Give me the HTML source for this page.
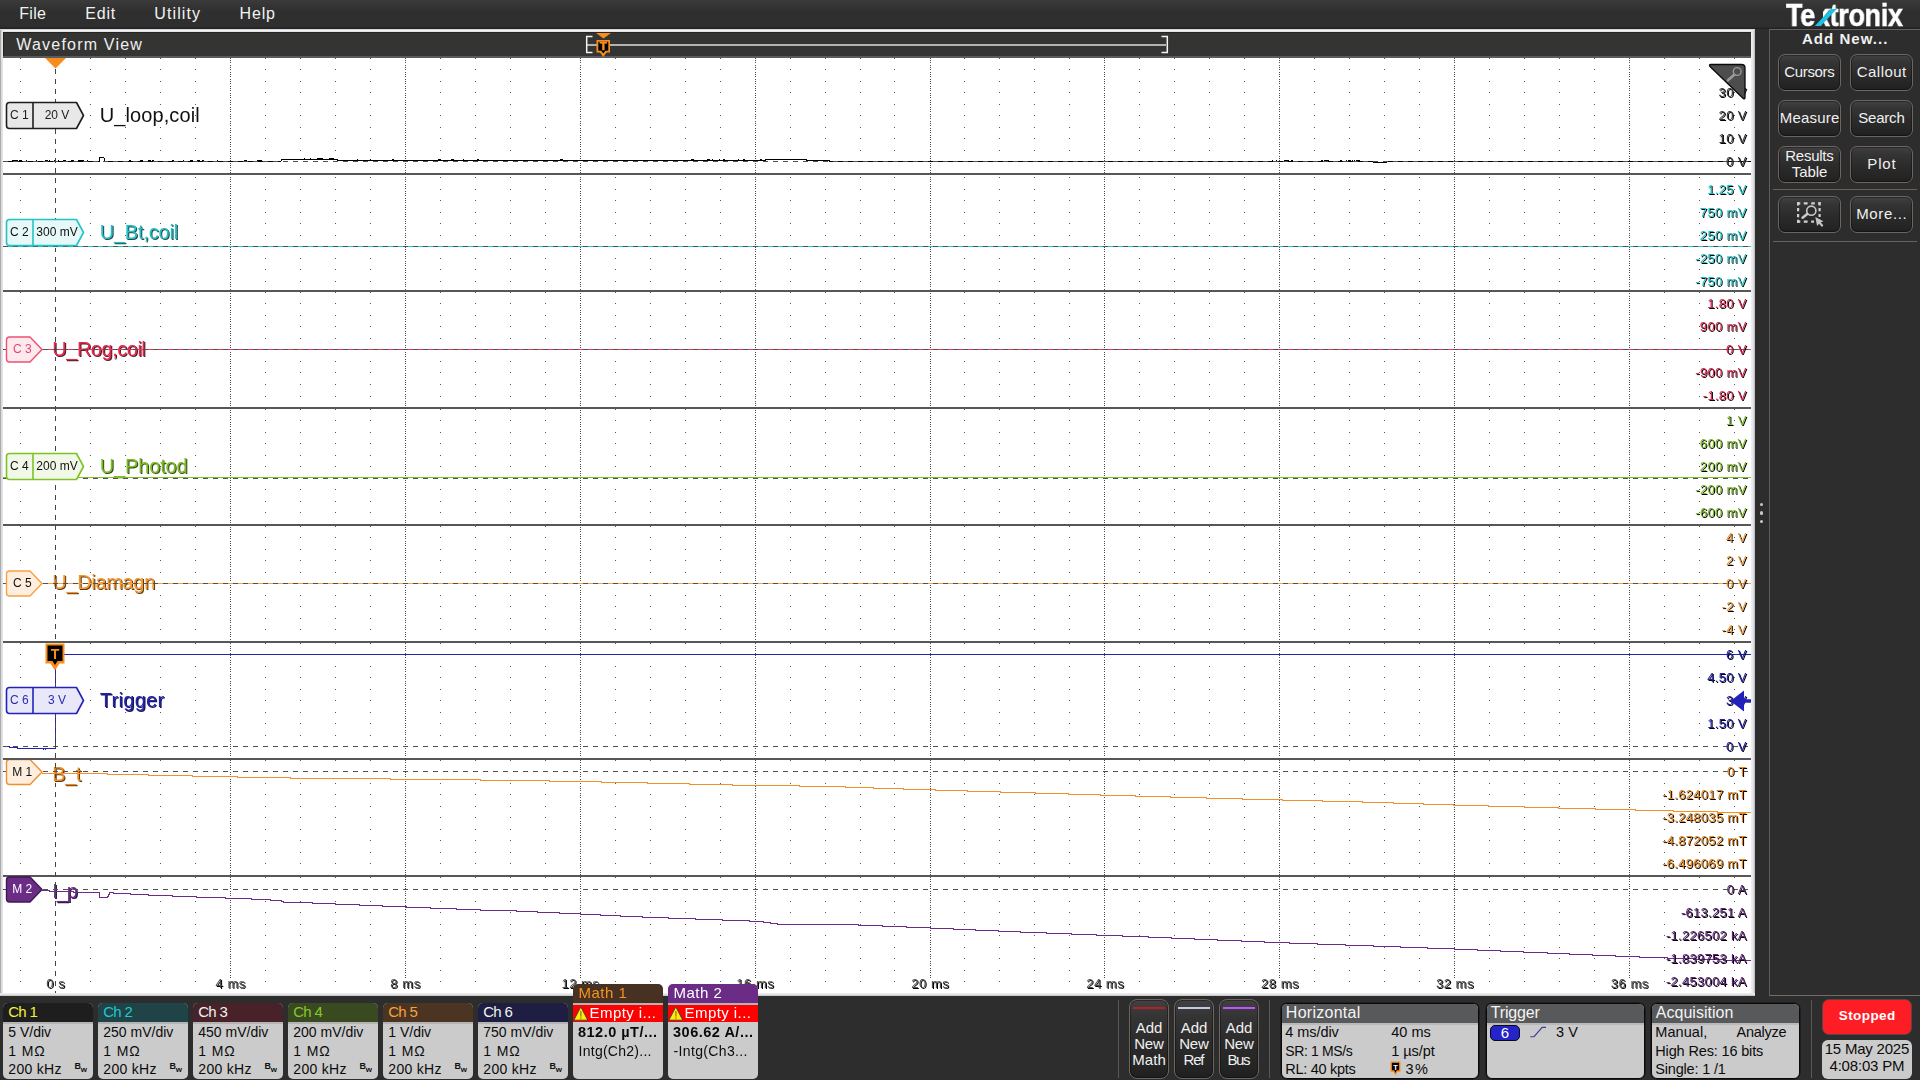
<!DOCTYPE html>
<html lang="en"><head><meta charset="utf-8"><title>Tektronix Waveform View</title>
<style>
*{box-sizing:border-box}
html,body{margin:0;padding:0}
body{width:1920px;height:1080px;overflow:hidden;background:#2d2d2d;font-family:"Liberation Sans",sans-serif;position:relative;color:#fff}
.t{position:absolute;white-space:nowrap}
.abs{position:absolute}
#menubar{position:absolute;left:0;top:0;width:1920px;height:29px;background:linear-gradient(#3b3b3b 0,#343434 6px,#2f2f2f 12px,#2e2e2e 27px,#222 28px,#222 29px)}
#frame{position:absolute;left:0;top:29px;width:1754.6px;height:967px;background:linear-gradient(#cfcfd2,#f2f2f4 50%,#d0d0d3);}
#frame .l{position:absolute;left:0;top:1px;width:3px;height:966px;background:linear-gradient(90deg,#8a8a8c,#d8d8db 40%,#e9e9ec)}
#frame .r{position:absolute;right:0;top:1px;width:3.6px;height:966px;background:linear-gradient(90deg,#f0f0f3,#e4e4e8 55%,#b4b4b8)}
#frame .b{position:absolute;left:0;bottom:0;width:1754.6px;height:3px;background:linear-gradient(#f0f0f2,#dedee2 60%,#bdbdc0)}
#frame .tp{position:absolute;left:0;top:0;width:1754.6px;height:3px;background:linear-gradient(#c4c4c7,#f4f4f6 45%,#dcdce0)}
#title{position:absolute;left:3px;top:32px;width:1748px;height:26px;background:#343432;border-bottom:2px solid #5b5b5d;box-shadow:inset 1px 1px 0 #242422}
#plotbg{position:absolute;left:3px;top:58px;width:1748px;height:935px;background:#fff}
#waveview{position:absolute;left:0;top:0;width:1755px;height:996px}
#bottombar{position:absolute;left:0;top:996px;width:1920px;height:84px;background:#2d2d2d}
svg.plot{position:absolute;left:0;top:0;will-change:transform}
.sep{position:absolute;left:3px;width:1748px;height:2px;background:#575757}
#rpanel{position:absolute;left:1769px;top:29px;width:152px;height:967px;border:1px solid #756b65;border-left-color:#5c5d5f;border-top-color:#6b605c;background:#2d2d2d}
.btn{position:absolute;border:1px solid #6e655f;border-radius:7px;background:linear-gradient(#414143 0,#343435 22%,#2b2b2b 55%,#242424 88%,#1f1f1f 100%);box-shadow:inset 0 0 0 1px rgba(0,0,0,.35)}
.hr{position:absolute;height:1px;background:#6a615b}
.vr{position:absolute;width:1px;background:#5e5651}
.badge{position:absolute;top:1003px;height:76px;border-radius:5px;background:#cbcbcb;overflow:hidden}
.badge .hd{position:absolute;left:0;top:0;right:0;height:19px}
.badge .hl{position:absolute;left:0;right:0;top:19px;height:2px;background:#b4b4b4}
.sbadge{position:absolute;top:1003px;height:76px;border-radius:6px;background:#cbcbcb;overflow:hidden;border:1px solid #0a0a0a;box-shadow:0 0 0 .5px #111}
.sbadge .hd{position:absolute;left:0;top:0;right:0;height:19px;background:#58595b}
.sbadge .hl{position:absolute;left:0;right:0;top:19px;height:2px;background:#b9b9b9}
</style></head>
<body>
<nav id="menubar">
<span class="t " style="top:4px;font-size:16px;line-height:20px;color:#f2f2f2;letter-spacing:0.273px;left:19.30px;">File</span>
<span class="t " style="top:4px;font-size:16px;line-height:20px;color:#f2f2f2;letter-spacing:0.810px;left:85.20px;">Edit</span>
<span class="t " style="top:4px;font-size:16px;line-height:20px;color:#f2f2f2;letter-spacing:1.098px;left:154.30px;">Utility</span>
<span class="t " style="top:4px;font-size:16px;line-height:20px;color:#f2f2f2;letter-spacing:0.798px;left:239.60px;">Help</span>
<span class="t logo" style="left:1786.4px;top:-1px;font-size:30px;line-height:34px;font-weight:bold;color:#fff;letter-spacing:-0.35px;-webkit-text-stroke:0.55px #fff;transform-origin:0 27px;transform:scale(0.9,1.075);will-change:transform">Tektronix</span>
<div class="abs" id="kcover" style="left:1815.3px;top:0;width:7.9px;height:29px;background:linear-gradient(#3b3b3b 0,#343434 6px,#2f2f2f 12px,#2e2e2e 27px,#222 28px,#222 29px)"></div>
<div class="abs" style="left:1815.2px;top:9px;width:6.3px;height:16.8px;background:#1fc1e4;transform:skewX(-43.2deg);transform-origin:0 100%"></div>
</nav>
<section id="waveview">
<div id="frame"><div class="tp"></div><div class="l"></div><div class="r"></div><div class="b"></div></div>
<div id="title"></div>
<span class="t " style="top:35px;font-size:16px;line-height:20px;color:#efefef;letter-spacing:1.197px;left:16.30px;">Waveform View</span>
<div id="plotbg"></div>
<div class="sep" style="top:173px"></div><div class="sep" style="top:290px"></div><div class="sep" style="top:407px"></div><div class="sep" style="top:524px"></div><div class="sep" style="top:641px"></div><div class="sep" style="top:758px"></div><div class="sep" style="top:875px"></div>
<svg class="plot" width="1754" height="1000" viewBox="0 0 1754 1000" font-family="'Liberation Sans', sans-serif"><defs><clipPath id="c7"><rect x="0" y="760" width="200" height="60"/></clipPath></defs><g stroke="#5a5a5a" stroke-width="1" stroke-dasharray="0 0 1 10 1 11 1 10 1 11 1 10 1 11 1 10 1 11 1 26 1 11 1 10 1 11 1 10 1 11 1 22 1 10 1 11 1 10 1 10 1 11 1 10 1 11 1 22 1 10 1 11 1 11 1 12 1 10 1 11 1 10 1 11 1 10 1 22 1 11 1 10 1 13 1 10 1 11 1 10 1 11 1 22 1 10 1 11 1 10 1 13 1 10 1 11 1 10 1 11 1 10 1 11 1 10 1 11 1 24 1 22 1 10 1 11 1 10 1 11 1 10 1 11 1 10 1 13 1 23 1 10 1 11 1 10 1 11 1 10 1 11 1 10 1 2000" shape-rendering="crispEdges"><line x1="20.5" x2="20.5" y1="58" y2="993"/><line x1="90.5" x2="90.5" y1="58" y2="993"/><line x1="125.5" x2="125.5" y1="58" y2="993"/><line x1="160.5" x2="160.5" y1="58" y2="993"/><line x1="195.5" x2="195.5" y1="58" y2="993"/><line x1="265.5" x2="265.5" y1="58" y2="993"/><line x1="300.5" x2="300.5" y1="58" y2="993"/><line x1="335.5" x2="335.5" y1="58" y2="993"/><line x1="370.5" x2="370.5" y1="58" y2="993"/><line x1="440.5" x2="440.5" y1="58" y2="993"/><line x1="475.5" x2="475.5" y1="58" y2="993"/><line x1="510.5" x2="510.5" y1="58" y2="993"/><line x1="545.5" x2="545.5" y1="58" y2="993"/><line x1="615.5" x2="615.5" y1="58" y2="993"/><line x1="650.5" x2="650.5" y1="58" y2="993"/><line x1="685.5" x2="685.5" y1="58" y2="993"/><line x1="720.5" x2="720.5" y1="58" y2="993"/><line x1="790.5" x2="790.5" y1="58" y2="993"/><line x1="825.5" x2="825.5" y1="58" y2="993"/><line x1="860.5" x2="860.5" y1="58" y2="993"/><line x1="894.5" x2="894.5" y1="58" y2="993"/><line x1="964.5" x2="964.5" y1="58" y2="993"/><line x1="999.5" x2="999.5" y1="58" y2="993"/><line x1="1034.5" x2="1034.5" y1="58" y2="993"/><line x1="1069.5" x2="1069.5" y1="58" y2="993"/><line x1="1139.5" x2="1139.5" y1="58" y2="993"/><line x1="1174.5" x2="1174.5" y1="58" y2="993"/><line x1="1209.5" x2="1209.5" y1="58" y2="993"/><line x1="1244.5" x2="1244.5" y1="58" y2="993"/><line x1="1314.5" x2="1314.5" y1="58" y2="993"/><line x1="1349.5" x2="1349.5" y1="58" y2="993"/><line x1="1384.5" x2="1384.5" y1="58" y2="993"/><line x1="1419.5" x2="1419.5" y1="58" y2="993"/><line x1="1489.5" x2="1489.5" y1="58" y2="993"/><line x1="1524.5" x2="1524.5" y1="58" y2="993"/><line x1="1559.5" x2="1559.5" y1="58" y2="993"/><line x1="1594.5" x2="1594.5" y1="58" y2="993"/><line x1="1664.5" x2="1664.5" y1="58" y2="993"/><line x1="1699.5" x2="1699.5" y1="58" y2="993"/><line x1="1734.5" x2="1734.5" y1="58" y2="993"/></g><g stroke="#4a4a4a" stroke-width="1" stroke-dasharray="1 1 1 1 1 2" shape-rendering="crispEdges"><line x1="230.5" x2="230.5" y1="58" y2="978"/><line x1="405.5" x2="405.5" y1="58" y2="978"/><line x1="580.5" x2="580.5" y1="58" y2="978"/><line x1="755.5" x2="755.5" y1="58" y2="978"/><line x1="930.5" x2="930.5" y1="58" y2="978"/><line x1="1104.5" x2="1104.5" y1="58" y2="978"/><line x1="1279.5" x2="1279.5" y1="58" y2="978"/><line x1="1454.5" x2="1454.5" y1="58" y2="978"/><line x1="1629.5" x2="1629.5" y1="58" y2="978"/></g><text x="99.70" y="121.60" font-size="20" fill="#111" text-anchor="start" letter-spacing="0.105">U_loop,coil</text><text x="99.70" y="238.60" font-size="20" fill="#1fc0c6" text-anchor="start" letter-spacing="-0.191" style="text-shadow:1px 1px 0 #2a4a4c">U_Bt,coil</text><text x="52.30" y="355.60" font-size="20" fill="#e8294f" text-anchor="start" letter-spacing="-0.480" style="text-shadow:1px 1px 0 #4a2028">U_Rog,coil</text><text x="99.70" y="472.60" font-size="20" fill="#7cbc26" text-anchor="start" letter-spacing="-0.137" style="text-shadow:1px 1px 0 #34481a">U_Photod</text><text x="52.30" y="589.40" font-size="20" fill="#f6962a" text-anchor="start" letter-spacing="-0.326" style="text-shadow:1px 1px 0 #5a3c18">U_Diamagn</text><text x="99.70" y="706.80" font-size="20" fill="#2222b0" text-anchor="start" letter-spacing="0.315" style="text-shadow:1px 1px 0 #16164a">Trigger</text><text x="52.30" y="780.50" font-size="20" fill="#ee8a1e" text-anchor="start" letter-spacing="-0.510" style="text-shadow:1px 1px 0 #5a3c18">B_t</text><text x="52.30" y="897.60" font-size="20" fill="#6b2c86" text-anchor="start" letter-spacing="-1.151" style="text-shadow:1px 1px 0 #2a1236">I_p</text><polyline fill="none" stroke="#000" stroke-width="1" shape-rendering="crispEdges" points="3,161.5 99.5,161.5 99.5,157.5 103.5,157.5 104.5,158.5 104.5,161.5 281,161.5 281.5,159.5 337,159.5 337.5,160.5 765,160.5 765.5,159.5 806.5,159.5 807,160.5 829.5,160.5 830,161.5 1373.5,161.5 1374,162.5 1386.5,162.5 1387,161.5 1751,161.5"/><g fill="#000" shape-rendering="crispEdges"><rect x="49" y="160" width="1" height="1"/><rect x="58" y="160" width="1" height="1"/><rect x="17" y="160" width="1" height="1"/><rect x="54" y="160" width="1" height="1"/><rect x="72" y="160" width="1" height="1"/><rect x="12" y="160" width="1" height="1"/><rect x="63" y="160" width="3" height="1"/><rect x="16" y="160" width="1" height="1"/><rect x="19" y="160" width="3" height="1"/><rect x="15" y="160" width="1" height="1"/><rect x="36" y="160" width="1" height="1"/><rect x="81" y="160" width="3" height="1"/><rect x="14" y="160" width="1" height="1"/><rect x="13" y="160" width="1" height="1"/><rect x="45" y="160" width="3" height="1"/><rect x="26" y="160" width="1" height="1"/><rect x="81" y="160" width="2" height="1"/><rect x="79" y="160" width="1" height="1"/><rect x="21" y="160" width="1" height="1"/><rect x="55" y="160" width="1" height="1"/><rect x="78" y="160" width="1" height="1"/><rect x="80" y="160" width="1" height="1"/><rect x="87" y="160" width="1" height="1"/><rect x="71" y="160" width="3" height="1"/><rect x="190" y="160" width="3" height="1"/><rect x="259" y="160" width="3" height="1"/><rect x="202" y="160" width="2" height="1"/><rect x="173" y="160" width="1" height="1"/><rect x="172" y="160" width="1" height="1"/><rect x="257" y="160" width="2" height="1"/><rect x="244" y="160" width="3" height="1"/><rect x="197" y="160" width="3" height="1"/><rect x="183" y="160" width="1" height="1"/><rect x="140" y="160" width="3" height="1"/><rect x="152" y="160" width="2" height="1"/><rect x="148" y="160" width="3" height="1"/><rect x="217" y="160" width="1" height="1"/><rect x="129" y="160" width="2" height="1"/><rect x="321" y="158" width="2" height="1"/><rect x="331" y="158" width="3" height="1"/><rect x="304" y="158" width="1" height="1"/><rect x="317" y="158" width="3" height="1"/><rect x="304" y="158" width="1" height="1"/><rect x="319" y="158" width="3" height="1"/><rect x="318" y="158" width="3" height="1"/><rect x="322" y="158" width="1" height="1"/><rect x="329" y="158" width="2" height="1"/><rect x="310" y="158" width="1" height="1"/><rect x="463" y="159" width="1" height="1"/><rect x="392" y="159" width="2" height="1"/><rect x="370" y="159" width="1" height="1"/><rect x="438" y="159" width="3" height="1"/><rect x="560" y="159" width="3" height="1"/><rect x="357" y="159" width="1" height="1"/><rect x="451" y="159" width="3" height="1"/><rect x="477" y="159" width="2" height="1"/><rect x="707" y="159" width="3" height="1"/><rect x="760" y="159" width="2" height="1"/><rect x="743" y="159" width="2" height="1"/><rect x="738" y="159" width="1" height="1"/><rect x="709" y="159" width="1" height="1"/><rect x="712" y="159" width="1" height="1"/><rect x="719" y="159" width="1" height="1"/><rect x="691" y="159" width="3" height="1"/><rect x="765" y="159" width="1" height="1"/><rect x="723" y="159" width="2" height="1"/><rect x="1272" y="160" width="1" height="1"/><rect x="1285" y="160" width="2" height="1"/><rect x="1291" y="160" width="2" height="1"/><rect x="1276" y="160" width="1" height="1"/><rect x="1286" y="160" width="3" height="1"/><rect x="1284" y="160" width="3" height="1"/><rect x="1284" y="160" width="1" height="1"/><rect x="1348" y="160" width="3" height="1"/><rect x="1321" y="160" width="1" height="1"/><rect x="1322" y="160" width="1" height="1"/><rect x="1346" y="160" width="1" height="1"/><rect x="1325" y="160" width="2" height="1"/><rect x="1356" y="160" width="1" height="1"/><rect x="1324" y="160" width="1" height="1"/><rect x="1354" y="160" width="1" height="1"/><rect x="1352" y="160" width="1" height="1"/><rect x="1341" y="160" width="1" height="1"/><rect x="1322" y="160" width="1" height="1"/><rect x="1357" y="160" width="3" height="1"/><rect x="1327" y="160" width="2" height="1"/><rect x="1340" y="160" width="2" height="1"/><rect x="1348" y="160" width="1" height="1"/><rect x="1325" y="160" width="3" height="1"/></g><line x1="3" x2="1751" y1="246.5" y2="246.5" stroke="#1fc8cc" stroke-width="1" shape-rendering="crispEdges"/><line x1="3" x2="1751" y1="349.5" y2="349.5" stroke="#e8385e" stroke-width="1" shape-rendering="crispEdges"/><line x1="3" x2="1751" y1="477.5" y2="477.5" stroke="#7cc023" stroke-width="1" shape-rendering="crispEdges"/><line x1="3" x2="1751" y1="583.5" y2="583.5" stroke="#f9a13c" stroke-width="1" shape-rendering="crispEdges"/><polyline fill="none" stroke="#2323b4" stroke-width="1" shape-rendering="crispEdges" points="8,746.5 9.5,746.5 9.5,747.5 17.5,747.5 17.5,748.5 55.5,748.5 55.5,654.5 1751,654.5"/><rect x="43" y="749" width="1" height="1" fill="#2323b4"/><rect x="45" y="749" width="1" height="1" fill="#2323b4"/><line x1="3" x2="1751" y1="161.5" y2="161.5" stroke="#505050" stroke-width="1" stroke-dasharray="5 5" shape-rendering="crispEdges"/><line x1="3" x2="1751" y1="246.5" y2="246.5" stroke="#505050" stroke-width="1" stroke-dasharray="5 5" shape-rendering="crispEdges"/><line x1="3" x2="1751" y1="349.5" y2="349.5" stroke="#505050" stroke-width="1" stroke-dasharray="5 5" shape-rendering="crispEdges"/><line x1="3" x2="1751" y1="478.5" y2="478.5" stroke="#505050" stroke-width="1" stroke-dasharray="5 5" shape-rendering="crispEdges"/><line x1="3" x2="1751" y1="583.5" y2="583.5" stroke="#505050" stroke-width="1" stroke-dasharray="5 5" shape-rendering="crispEdges"/><line x1="3" x2="1751" y1="746.5" y2="746.5" stroke="#505050" stroke-width="1" stroke-dasharray="5 5" shape-rendering="crispEdges"/><line x1="3" x2="1751" y1="771.5" y2="771.5" stroke="#505050" stroke-width="1" stroke-dasharray="5 5" shape-rendering="crispEdges"/><line x1="3" x2="1751" y1="889.5" y2="889.5" stroke="#505050" stroke-width="1" stroke-dasharray="5 5" shape-rendering="crispEdges"/><line x1="55.5" x2="55.5" y1="59.35" y2="993" stroke="#444" stroke-width="1" stroke-dasharray="4.9 5.007" shape-rendering="crispEdges"/><polyline fill="none" stroke="#f0902a" stroke-width="1" shape-rendering="crispEdges" points="42,773.5 107.5,773.5 107.5,774.5 148.5,774.5 148.5,775.5 192.5,775.5 192.5,776.5 237.5,776.5 237.5,777.5 290,777.5 290,778.5 390,778.5 390,779.5 480,779.5 480,780.5 549,780.5 549,781.5 601,781.5 601,782.5 647,782.5 647,783.5 689,783.5 689,784.5 732,784.5 732,785.5 799,785.5 799,786.5 845,786.5 845,787.5 873,787.5 873,788.5 903,788.5 903,789.5 935,789.5 935,790.5 967,790.5 967,791.5 1000,791.5 1000,792.5 1035,792.5 1035,793.5 1068,793.5 1068,794.5 1100,794.5 1100,795.5 1135,795.5 1135,796.5 1170,796.5 1170,797.5 1206,797.5 1206,798.5 1242,798.5 1242,799.5 1282,799.5 1282,800.5 1322,800.5 1322,801.5 1362,801.5 1362,802.5 1393,802.5 1393,803.5 1423,803.5 1423,804.5 1453,804.5 1453,805.5 1488,805.5 1488,806.5 1524,806.5 1524,807.5 1558,807.5 1558,808.5 1595,808.5 1595,809.5 1635,809.5 1635,810.5 1673.5,810.5 1673.5,811.5 1717.5,811.5 1717.5,812.5 1751,812.5"/><polyline fill="none" stroke="#6b2c86" stroke-width="1" shape-rendering="crispEdges" points="42,890.5 49,890.5 49,891.5 73,891.5 73,892.5 99,892.5 99,897.5 107,897.5 107,896.5 108,896.5 108,894.5 109,894.5 109,892.5 113,892.5 113,893.5 130,893.5 130,894.5 148,894.5 148,895.5 172,895.5 172,896.5 196,896.5 196,897.5 225,897.5 225,898.5 251,898.5 251,899.5 270,899.5 270,900.5 281,900.5 281,901.5 283,901.5 283,902.5 312,902.5 312,903.5 335,903.5 335,904.5 359,904.5 359,905.5 382,905.5 382,906.5 406,906.5 406,907.5 430,907.5 430,908.5 456,908.5 456,909.5 480,909.5 480,910.5 516,910.5 516,911.5 537,911.5 537,912.5 559,912.5 559,913.5 580,913.5 580,914.5 600,914.5 600,915.5 620,915.5 620,916.5 642,916.5 642,917.5 668,917.5 668,918.5 695,918.5 695,919.5 722,919.5 722,920.5 749,920.5 749,921.5 763,921.5 763,922.5 770,922.5 770,923.5 777,923.5 777,924.5 858,924.5 858,925.5 882,925.5 882,926.5 906,926.5 906,927.5 930,927.5 930,928.5 953,928.5 953,929.5 975,929.5 975,930.5 998,930.5 998,931.5 1020,931.5 1020,932.5 1046,932.5 1046,933.5 1071,933.5 1071,934.5 1096,934.5 1096,935.5 1122,935.5 1122,936.5 1148,936.5 1148,937.5 1171,937.5 1171,938.5 1194,938.5 1194,939.5 1217,939.5 1217,940.5 1241,940.5 1241,941.5 1264,941.5 1264,942.5 1289,942.5 1289,943.5 1317,943.5 1317,944.5 1345,944.5 1345,945.5 1373,945.5 1373,946.5 1400,946.5 1400,947.5 1427,947.5 1427,948.5 1454,948.5 1454,949.5 1477,949.5 1477,950.5 1500,950.5 1500,951.5 1523,951.5 1523,952.5 1547,952.5 1547,953.5 1569,953.5 1569,954.5 1592,954.5 1592,955.5 1615,955.5 1615,956.5 1639,956.5 1639,957.5 1667,957.5 1667,958.5 1695,958.5 1695,959.5 1723,959.5 1723,960.5 1751,960.5"/><text x="1746.76" y="96.70" font-size="13" fill="#383838" text-anchor="end" letter-spacing="0.357" style="text-shadow:1px 1px 0 #000">30 V</text><text x="1746.76" y="119.95" font-size="13" fill="#383838" text-anchor="end" letter-spacing="0.357" style="text-shadow:1px 1px 0 #000">20 V</text><text x="1746.76" y="142.70" font-size="13" fill="#383838" text-anchor="end" letter-spacing="0.357" style="text-shadow:1px 1px 0 #000">10 V</text><text x="1746.79" y="165.70" font-size="13" fill="#383838" text-anchor="end" letter-spacing="0.390" style="text-shadow:1px 1px 0 #000">0 V</text><text x="1746.70" y="193.70" font-size="13" fill="#1fc0c4" text-anchor="end" letter-spacing="0.301" style="text-shadow:1px 1px 0 #000">1.25 V</text><text x="1746.76" y="216.70" font-size="13" fill="#1fc0c4" text-anchor="end" letter-spacing="0.358" style="text-shadow:1px 1px 0 #000">750 mV</text><text x="1746.76" y="239.95" font-size="13" fill="#1fc0c4" text-anchor="end" letter-spacing="0.358" style="text-shadow:1px 1px 0 #000">250 mV</text><text x="1746.73" y="262.70" font-size="13" fill="#1fc0c4" text-anchor="end" letter-spacing="0.328" style="text-shadow:1px 1px 0 #000">-250 mV</text><text x="1746.73" y="285.70" font-size="13" fill="#1fc0c4" text-anchor="end" letter-spacing="0.328" style="text-shadow:1px 1px 0 #000">-750 mV</text><text x="1746.70" y="307.70" font-size="13" fill="#d8284e" text-anchor="end" letter-spacing="0.301" style="text-shadow:1px 1px 0 #000">1.80 V</text><text x="1746.76" y="330.70" font-size="13" fill="#d8284e" text-anchor="end" letter-spacing="0.358" style="text-shadow:1px 1px 0 #000">900 mV</text><text x="1746.79" y="354.10" font-size="13" fill="#d8284e" text-anchor="end" letter-spacing="0.390" style="text-shadow:1px 1px 0 #000">0 V</text><text x="1746.73" y="377.20" font-size="13" fill="#d8284e" text-anchor="end" letter-spacing="0.328" style="text-shadow:1px 1px 0 #000">-900 mV</text><text x="1746.68" y="400.30" font-size="13" fill="#d8284e" text-anchor="end" letter-spacing="0.279" style="text-shadow:1px 1px 0 #000">-1.80 V</text><text x="1746.79" y="424.70" font-size="13" fill="#78b820" text-anchor="end" letter-spacing="0.390" style="text-shadow:1px 1px 0 #000">1 V</text><text x="1746.76" y="447.70" font-size="13" fill="#78b820" text-anchor="end" letter-spacing="0.358" style="text-shadow:1px 1px 0 #000">600 mV</text><text x="1746.76" y="470.70" font-size="13" fill="#78b820" text-anchor="end" letter-spacing="0.358" style="text-shadow:1px 1px 0 #000">200 mV</text><text x="1746.73" y="493.70" font-size="13" fill="#78b820" text-anchor="end" letter-spacing="0.328" style="text-shadow:1px 1px 0 #000">-200 mV</text><text x="1746.73" y="516.70" font-size="13" fill="#78b820" text-anchor="end" letter-spacing="0.328" style="text-shadow:1px 1px 0 #000">-600 mV</text><text x="1746.79" y="541.70" font-size="13" fill="#f0983a" text-anchor="end" letter-spacing="0.390" style="text-shadow:1px 1px 0 #000">4 V</text><text x="1746.79" y="564.70" font-size="13" fill="#f0983a" text-anchor="end" letter-spacing="0.390" style="text-shadow:1px 1px 0 #000">2 V</text><text x="1746.79" y="587.70" font-size="13" fill="#f0983a" text-anchor="end" letter-spacing="0.390" style="text-shadow:1px 1px 0 #000">0 V</text><text x="1746.72" y="610.70" font-size="13" fill="#f0983a" text-anchor="end" letter-spacing="0.318" style="text-shadow:1px 1px 0 #000">-2 V</text><text x="1746.72" y="633.70" font-size="13" fill="#f0983a" text-anchor="end" letter-spacing="0.318" style="text-shadow:1px 1px 0 #000">-4 V</text><text x="1746.79" y="658.70" font-size="13" fill="#2222aa" text-anchor="end" letter-spacing="0.390" style="text-shadow:1px 1px 0 #000">6 V</text><text x="1746.70" y="681.70" font-size="13" fill="#2222aa" text-anchor="end" letter-spacing="0.301" style="text-shadow:1px 1px 0 #000">4.50 V</text><text x="1746.79" y="704.70" font-size="13" fill="#2222aa" text-anchor="end" letter-spacing="0.390" style="text-shadow:1px 1px 0 #000">3 V</text><text x="1746.70" y="727.70" font-size="13" fill="#2222aa" text-anchor="end" letter-spacing="0.301" style="text-shadow:1px 1px 0 #000">1.50 V</text><text x="1746.79" y="750.70" font-size="13" fill="#2222aa" text-anchor="end" letter-spacing="0.390" style="text-shadow:1px 1px 0 #000">0 V</text><text x="1746.77" y="775.70" font-size="13" fill="#e8861c" text-anchor="end" letter-spacing="0.371" style="text-shadow:1px 1px 0 #000">0 T</text><text x="1746.69" y="798.70" font-size="13" fill="#e8861c" text-anchor="end" letter-spacing="0.294" style="text-shadow:1px 1px 0 #000">-1.624017 mT</text><text x="1746.69" y="821.70" font-size="13" fill="#e8861c" text-anchor="end" letter-spacing="0.294" style="text-shadow:1px 1px 0 #000">-3.248035 mT</text><text x="1746.69" y="844.70" font-size="13" fill="#e8861c" text-anchor="end" letter-spacing="0.294" style="text-shadow:1px 1px 0 #000">-4.872052 mT</text><text x="1746.69" y="867.70" font-size="13" fill="#e8861c" text-anchor="end" letter-spacing="0.294" style="text-shadow:1px 1px 0 #000">-6.496069 mT</text><text x="1746.78" y="893.70" font-size="13" fill="#5f2579" text-anchor="end" letter-spacing="0.376" style="text-shadow:1px 1px 0 #000">0 A</text><text x="1746.68" y="916.70" font-size="13" fill="#5f2579" text-anchor="end" letter-spacing="0.279" style="text-shadow:1px 1px 0 #000">-613.251 A</text><text x="1746.68" y="939.70" font-size="13" fill="#5f2579" text-anchor="end" letter-spacing="0.281" style="text-shadow:1px 1px 0 #000">-1.226502 kA</text><text x="1746.68" y="962.70" font-size="13" fill="#5f2579" text-anchor="end" letter-spacing="0.281" style="text-shadow:1px 1px 0 #000">-1.839753 kA</text><text x="1746.68" y="985.70" font-size="13" fill="#5f2579" text-anchor="end" letter-spacing="0.281" style="text-shadow:1px 1px 0 #000">-2.453004 kA</text><text x="55.76" y="988.00" font-size="13" fill="#505050" text-anchor="middle" letter-spacing="0.520" style="text-shadow:1px 1px 0 #000">0 s</text><text x="230.68" y="988.00" font-size="13" fill="#505050" text-anchor="middle" letter-spacing="0.563" style="text-shadow:1px 1px 0 #000">4 ms</text><text x="405.58" y="988.00" font-size="13" fill="#505050" text-anchor="middle" letter-spacing="0.563" style="text-shadow:1px 1px 0 #000">8 ms</text><text x="580.47" y="988.00" font-size="13" fill="#505050" text-anchor="middle" letter-spacing="0.531" style="text-shadow:1px 1px 0 #000">12 ms</text><text x="755.37" y="988.00" font-size="13" fill="#505050" text-anchor="middle" letter-spacing="0.531" style="text-shadow:1px 1px 0 #000">16 ms</text><text x="930.27" y="988.00" font-size="13" fill="#505050" text-anchor="middle" letter-spacing="0.531" style="text-shadow:1px 1px 0 #000">20 ms</text><text x="1105.17" y="988.00" font-size="13" fill="#505050" text-anchor="middle" letter-spacing="0.531" style="text-shadow:1px 1px 0 #000">24 ms</text><text x="1280.07" y="988.00" font-size="13" fill="#505050" text-anchor="middle" letter-spacing="0.531" style="text-shadow:1px 1px 0 #000">28 ms</text><text x="1454.97" y="988.00" font-size="13" fill="#505050" text-anchor="middle" letter-spacing="0.531" style="text-shadow:1px 1px 0 #000">32 ms</text><text x="1629.87" y="988.00" font-size="13" fill="#505050" text-anchor="middle" letter-spacing="0.531" style="text-shadow:1px 1px 0 #000">36 ms</text><path d="M9.5,102.5 H76.5 L83.5,115.5 L76.5,128.5 H9.5 Q6.5,128.5 6.5,125.5 V105.5 Q6.5,102.5 9.5,102.5 Z" fill="#e8e8e8" stroke="#1e1e1e" stroke-width="1.6" stroke-linejoin="round"/><line x1="33" x2="33" y1="102.5" y2="128.5" stroke="#1e1e1e" stroke-width="1.6"/><text x="19.30" y="119.10" font-size="12" fill="#1a1a1a" text-anchor="middle">C 1</text><text x="57.00" y="119.10" font-size="12" fill="#1a1a1a" text-anchor="middle">20 V</text><path d="M9.5,219.5 H76.5 L83.5,232.5 L76.5,245.5 H9.5 Q6.5,245.5 6.5,242.5 V222.5 Q6.5,219.5 9.5,219.5 Z" fill="#e6f8f8" stroke="#22c4c8" stroke-width="1.6" stroke-linejoin="round"/><line x1="33" x2="33" y1="219.5" y2="245.5" stroke="#22c4c8" stroke-width="1.6"/><text x="19.30" y="236.10" font-size="12" fill="#111" text-anchor="middle">C 2</text><text x="57.00" y="236.10" font-size="12" fill="#111" text-anchor="middle">300 mV</text><path d="M9.5,337.0 H30 L42,349.5 L30,362.0 H9.5 Q6.5,362.0 6.5,359.0 V340.0 Q6.5,337.0 9.5,337.0 Z" fill="#fdeaee" stroke="#ee5070" stroke-width="1.4" stroke-linejoin="round"/><text x="22.30" y="353.10" font-size="12" fill="#e8446a" text-anchor="middle">C 3</text><path d="M9.5,453.5 H76.5 L83.5,466.5 L76.5,479.5 H9.5 Q6.5,479.5 6.5,476.5 V456.5 Q6.5,453.5 9.5,453.5 Z" fill="#f1f8e8" stroke="#7ec225" stroke-width="1.6" stroke-linejoin="round"/><line x1="33" x2="33" y1="453.5" y2="479.5" stroke="#7ec225" stroke-width="1.6"/><text x="19.30" y="470.10" font-size="12" fill="#111" text-anchor="middle">C 4</text><text x="57.00" y="470.10" font-size="12" fill="#111" text-anchor="middle">200 mV</text><path d="M9.5,571.0 H30 L42,583.5 L30,596.0 H9.5 Q6.5,596.0 6.5,593.0 V574.0 Q6.5,571.0 9.5,571.0 Z" fill="#fdeee0" stroke="#f9a040" stroke-width="1.4" stroke-linejoin="round"/><text x="22.30" y="587.10" font-size="12" fill="#111" text-anchor="middle">C 5</text><path d="M9.5,687.5 H76.5 L83.5,700.5 L76.5,713.5 H9.5 Q6.5,713.5 6.5,710.5 V690.5 Q6.5,687.5 9.5,687.5 Z" fill="#e8e8f8" stroke="#2323bb" stroke-width="1.6" stroke-linejoin="round"/><line x1="33" x2="33" y1="687.5" y2="713.5" stroke="#2323bb" stroke-width="1.6"/><text x="19.30" y="704.10" font-size="12" fill="#2a2ab8" text-anchor="middle">C 6</text><text x="57.00" y="704.10" font-size="12" fill="#2a2ab8" text-anchor="middle">3 V</text><g clip-path="url(#c7)"><path d="M9.5,759.5 H30 L42,772 L30,784.5 H9.5 Q6.5,784.5 6.5,781.5 V762.5 Q6.5,759.5 9.5,759.5 Z" fill="#fdeee0" stroke="#f0902a" stroke-width="1.4" stroke-linejoin="round"/><text x="22.30" y="775.60" font-size="12" fill="#111" text-anchor="middle">M 1</text></g><path d="M9.5,877.0 H30 L42,889.5 L30,902.0 H9.5 Q6.5,902.0 6.5,899.0 V880.0 Q6.5,877.0 9.5,877.0 Z" fill="#6b2c86" stroke="#3f1a50" stroke-width="1.4" stroke-linejoin="round"/><text x="22.30" y="893.10" font-size="12" fill="#fff" text-anchor="middle">M 2</text><polygon points="45,58 66,58 55.5,68.5" fill="#f78c1f"/><path d="M45.5,643.5 H64.5 V663.5 H59.5 L55,670.5 L50.5,663.5 H45.5 Z" fill="#f78c1f"/><path d="M47.5,645.5 H62.5 V661 H57.5 L55,665 L52.5,661 H47.5 Z" fill="#000"/><text x="55.00" y="659.00" font-size="14" fill="#f78c1f" text-anchor="middle" font-weight="bold">T</text><path d="M1730.5,701 L1744,690.5 V699.3 H1751 V702.7 H1744 V711.5 Z" fill="#2222bb"/><path d="M1711,64.5 H1741.5 Q1745,64.5 1745,68 V97.5 Q1745,100 1743,98.2 L1710,66.5 Q1708.5,64.5 1711,64.5 Z" fill="#4d4d4d" stroke="#0a0a0a" stroke-width="1.3"/><circle cx="1737.2" cy="71.5" r="3.9" fill="none" stroke="#9a9a9a" stroke-width="1.4"/><line x1="1734.2" y1="74.8" x2="1728" y2="80.3" stroke="#9a9a9a" stroke-width="2.7" stroke-linecap="round"/></svg>
<svg class="abs" style="left:580px;top:32px" width="600" height="26" viewBox="580 32 600 26" font-family="'Liberation Sans', sans-serif"><rect x="586" y="44" width="580" height="2" fill="#b2b2b2"/><path d="M592.5,36.5 H586.7 V52.5 H592.5" fill="none" stroke="#f4f4f4" stroke-width="1.5"/><path d="M1161.5,36.5 H1167.3 V52.5 H1161.5" fill="none" stroke="#f4f4f4" stroke-width="1.5"/><polygon points="596,33 611,33 603.5,38.5" fill="#f78c1f"/><path d="M596.5,40 H610 V52.5 H606.5 L603.3,57 L600,52.5 H596.5 Z" fill="#f78c1f"/><path d="M598.3,41.8 H608.3 V50.8 H605.3 L603.3,53.5 L601.3,50.8 H598.3 Z" fill="#000"/><text x="603.3" y="50.4" font-size="10.5" font-weight="bold" fill="#f78c1f" stroke="#f78c1f" stroke-width="0.5" text-anchor="middle" transform="translate(603.3 0) scale(1.12 1) translate(-603.3 0)">T</text></svg>
<div class="abs" style="left:1759.8px;top:502.7px;width:3.6px;height:3.6px;border-radius:50%;background:#c9c9c9"></div>
<div class="abs" style="left:1759.8px;top:511.2px;width:3.6px;height:3.6px;border-radius:50%;background:#c9c9c9"></div>
<div class="abs" style="left:1759.8px;top:519.7px;width:3.6px;height:3.6px;border-radius:50%;background:#c9c9c9"></div>
</section>
<aside id="rpanel"><div class="o" style="position:absolute;left:-1770px;top:-30px">
<span class="t " style="top:29px;font-size:15px;line-height:19px;color:#f0f0f0;letter-spacing:1.043px;left:1845.22px;transform:translateX(-50%);font-weight:bold;">Add New...</span>
<div class="btn" style="left:1778px;top:54px;width:63px;height:37px"></div><span class="t " style="top:62px;font-size:15px;line-height:19px;color:#f0f0f0;letter-spacing:-0.335px;left:1809.33px;transform:translateX(-50%);">Cursors</span>
<div class="btn" style="left:1850px;top:54px;width:63px;height:37px"></div><span class="t " style="top:62px;font-size:15px;line-height:19px;color:#f0f0f0;letter-spacing:0.468px;left:1881.73px;transform:translateX(-50%);">Callout</span>
<div class="btn" style="left:1778px;top:100px;width:63px;height:37px"></div><span class="t " style="top:108px;font-size:15px;line-height:19px;color:#f0f0f0;letter-spacing:0.190px;left:1809.60px;transform:translateX(-50%);">Measure</span>
<div class="btn" style="left:1850px;top:100px;width:63px;height:37px"></div><span class="t " style="top:108px;font-size:15px;line-height:19px;color:#f0f0f0;letter-spacing:-0.205px;left:1881.40px;transform:translateX(-50%);">Search</span>
<div class="btn" style="left:1778px;top:146px;width:63px;height:37px"></div><span class="t " style="top:146px;font-size:15px;line-height:19px;color:#f0f0f0;letter-spacing:-0.253px;left:1809.37px;transform:translateX(-50%);">Results</span><span class="t " style="top:162px;font-size:15px;line-height:19px;color:#f0f0f0;letter-spacing:-0.090px;left:1809.46px;transform:translateX(-50%);">Table</span>
<div class="btn" style="left:1850px;top:146px;width:63px;height:37px"></div><span class="t " style="top:154px;font-size:15px;line-height:19px;color:#f0f0f0;letter-spacing:0.884px;left:1881.94px;transform:translateX(-50%);">Plot</span>
<div class="hr" style="left:1773px;top:189px;width:144px"></div>
<div class="btn" style="left:1778px;top:196px;width:63px;height:37px"></div>
<div class="btn" style="left:1850px;top:196px;width:63px;height:37px"></div><span class="t " style="top:204px;font-size:15px;line-height:19px;color:#f0f0f0;letter-spacing:0.637px;left:1881.82px;transform:translateX(-50%);">More...</span>
<div class="hr" style="left:1773px;top:241px;width:144px"></div>
<svg class="abs" style="left:1790px;top:198px" width="40" height="34" viewBox="1790 198 40 34"><g stroke="#cfcfcf" stroke-width="2.2" fill="none"><line x1="1797" y1="203.4" x2="1820.7" y2="203.4" stroke-dasharray="3.3 3.5 3.8 3.6 3.6 3.4 3.3 9"/><line x1="1797" y1="221.6" x2="1814" y2="221.6" stroke-dasharray="3.3 3.5 3.8 3.6 3.6 9"/><line x1="1798.1" y1="202.3" x2="1798.1" y2="222.7" stroke-dasharray="3.2 2.5 3.3 2.6 3.3 2.5 3.2 9"/><line x1="1819.6" y1="202.3" x2="1819.6" y2="217" stroke-dasharray="3.2 2.5 3.3 2.6 3.3 9"/></g><circle cx="1811.3" cy="210.7" r="4.6" fill="#2c2c2c" stroke="#c9c9c9" stroke-width="1.6"/><line x1="1807.2" y1="214" x2="1802.6" y2="217.7" stroke="#c9c9c9" stroke-width="2.6" stroke-linecap="round"/><path d="M1815.3,217.1 L1817.1,226 L1819,223.8 L1821.9,227 L1823.4,225.5 L1820.8,222.2 L1823.5,221.3 Z" fill="#c4c4c4"/></svg>
</div></aside>
<footer id="bottombar"><div class="o" style="position:absolute;left:0;top:-996px">
<div class="badge" style="left:3px;width:90px"><div class="hd" style="background:#1e1e1e"></div><div class="hl"></div></div>
<span class="t " style="top:1002px;font-size:15px;line-height:19px;color:#f5ef3a;letter-spacing:-0.695px;left:8.20px;">Ch 1</span>
<span class="t " style="top:1023px;font-size:14px;line-height:18px;color:#0c0c0c;letter-spacing:0.000px;left:8.30px;">5 V/div</span>
<span class="t " style="top:1042px;font-size:14px;line-height:18px;color:#0c0c0c;letter-spacing:0.899px;left:8.30px;">1 MΩ</span>
<span class="t " style="top:1060px;font-size:14px;line-height:18px;color:#0c0c0c;letter-spacing:0.307px;left:8.30px;">200 kHz</span>
<span class="t " style="top:1060px;font-size:9px;line-height:13px;color:#111;left:74.50px;font-weight:bold;">B</span><span class="t " style="top:1064px;font-size:8px;line-height:12px;color:#111;left:80.80px;font-weight:bold;">w</span>
<div class="badge" style="left:98px;width:90px"><div class="hd" style="background:#1f4346"></div><div class="hl"></div></div>
<span class="t " style="top:1002px;font-size:15px;line-height:19px;color:#22c8d0;letter-spacing:-0.695px;left:103.20px;">Ch 2</span>
<span class="t " style="top:1023px;font-size:14px;line-height:18px;color:#0c0c0c;letter-spacing:0.000px;left:103.30px;">250 mV/div</span>
<span class="t " style="top:1042px;font-size:14px;line-height:18px;color:#0c0c0c;letter-spacing:0.899px;left:103.30px;">1 MΩ</span>
<span class="t " style="top:1060px;font-size:14px;line-height:18px;color:#0c0c0c;letter-spacing:0.307px;left:103.30px;">200 kHz</span>
<span class="t " style="top:1060px;font-size:9px;line-height:13px;color:#111;left:169.50px;font-weight:bold;">B</span><span class="t " style="top:1064px;font-size:8px;line-height:12px;color:#111;left:175.80px;font-weight:bold;">w</span>
<div class="badge" style="left:193px;width:90px"><div class="hd" style="background:#482228"></div><div class="hl"></div></div>
<span class="t " style="top:1002px;font-size:15px;line-height:19px;color:#f2f2f2;letter-spacing:-0.695px;left:198.20px;">Ch 3</span>
<span class="t " style="top:1023px;font-size:14px;line-height:18px;color:#0c0c0c;letter-spacing:0.000px;left:198.30px;">450 mV/div</span>
<span class="t " style="top:1042px;font-size:14px;line-height:18px;color:#0c0c0c;letter-spacing:0.899px;left:198.30px;">1 MΩ</span>
<span class="t " style="top:1060px;font-size:14px;line-height:18px;color:#0c0c0c;letter-spacing:0.307px;left:198.30px;">200 kHz</span>
<span class="t " style="top:1060px;font-size:9px;line-height:13px;color:#111;left:264.50px;font-weight:bold;">B</span><span class="t " style="top:1064px;font-size:8px;line-height:12px;color:#111;left:270.80px;font-weight:bold;">w</span>
<div class="badge" style="left:288px;width:90px"><div class="hd" style="background:#3a4a20"></div><div class="hl"></div></div>
<span class="t " style="top:1002px;font-size:15px;line-height:19px;color:#86c82a;letter-spacing:-0.695px;left:293.20px;">Ch 4</span>
<span class="t " style="top:1023px;font-size:14px;line-height:18px;color:#0c0c0c;letter-spacing:0.000px;left:293.30px;">200 mV/div</span>
<span class="t " style="top:1042px;font-size:14px;line-height:18px;color:#0c0c0c;letter-spacing:0.899px;left:293.30px;">1 MΩ</span>
<span class="t " style="top:1060px;font-size:14px;line-height:18px;color:#0c0c0c;letter-spacing:0.307px;left:293.30px;">200 kHz</span>
<span class="t " style="top:1060px;font-size:9px;line-height:13px;color:#111;left:359.50px;font-weight:bold;">B</span><span class="t " style="top:1064px;font-size:8px;line-height:12px;color:#111;left:365.80px;font-weight:bold;">w</span>
<div class="badge" style="left:383px;width:90px"><div class="hd" style="background:#4b3522"></div><div class="hl"></div></div>
<span class="t " style="top:1002px;font-size:15px;line-height:19px;color:#f9a13c;letter-spacing:-0.695px;left:388.20px;">Ch 5</span>
<span class="t " style="top:1023px;font-size:14px;line-height:18px;color:#0c0c0c;letter-spacing:0.000px;left:388.30px;">1 V/div</span>
<span class="t " style="top:1042px;font-size:14px;line-height:18px;color:#0c0c0c;letter-spacing:0.899px;left:388.30px;">1 MΩ</span>
<span class="t " style="top:1060px;font-size:14px;line-height:18px;color:#0c0c0c;letter-spacing:0.307px;left:388.30px;">200 kHz</span>
<span class="t " style="top:1060px;font-size:9px;line-height:13px;color:#111;left:454.50px;font-weight:bold;">B</span><span class="t " style="top:1064px;font-size:8px;line-height:12px;color:#111;left:460.80px;font-weight:bold;">w</span>
<div class="badge" style="left:478px;width:90px"><div class="hd" style="background:#1e1e42"></div><div class="hl"></div></div>
<span class="t " style="top:1002px;font-size:15px;line-height:19px;color:#f2f2f2;letter-spacing:-0.695px;left:483.20px;">Ch 6</span>
<span class="t " style="top:1023px;font-size:14px;line-height:18px;color:#0c0c0c;letter-spacing:0.000px;left:483.30px;">750 mV/div</span>
<span class="t " style="top:1042px;font-size:14px;line-height:18px;color:#0c0c0c;letter-spacing:0.899px;left:483.30px;">1 MΩ</span>
<span class="t " style="top:1060px;font-size:14px;line-height:18px;color:#0c0c0c;letter-spacing:0.307px;left:483.30px;">200 kHz</span>
<span class="t " style="top:1060px;font-size:9px;line-height:13px;color:#111;left:549.50px;font-weight:bold;">B</span><span class="t " style="top:1064px;font-size:8px;line-height:12px;color:#111;left:555.80px;font-weight:bold;">w</span>
<div class="badge" style="left:573px;width:90px;top:984px;height:95px"><div class="hd" style="background:#463122"></div><div class="hl"></div><div class="abs" style="left:0;top:21px;width:90px;height:17px;background:#ff0000"></div></div>
<span class="t " style="top:983px;font-size:15px;line-height:19px;color:#f7941f;letter-spacing:0.529px;left:578.40px;">Math 1</span>
<span class="t " style="top:1003px;font-size:15px;line-height:19px;color:#fff;letter-spacing:0.443px;left:589.50px;">Empty i...</span>
<svg class="abs" style="left:573px;top:1005px" width="16" height="17" viewBox="0 0 16 17"><path d="M7.8,1.8 L14.8,15.2 H0.8 Z" fill="#ffef00" stroke="#4a3a50" stroke-width="1" stroke-linejoin="round"/><rect x="7.1" y="6" width="1.5" height="5.6" fill="#9a8a30"/><rect x="7.1" y="12.4" width="1.5" height="1.5" fill="#9a8a30"/></svg>
<span class="t " style="top:1023px;font-size:14.5px;line-height:18.5px;color:#0a0a0a;letter-spacing:0.487px;left:578.00px;font-weight:bold;">812.0 µT/...</span>
<span class="t " style="top:1042px;font-size:14px;line-height:18px;color:#0c0c0c;letter-spacing:0.270px;left:578.50px;">Intg(Ch2)...</span>
<div class="badge" style="left:668px;width:90px;top:984px;height:95px"><div class="hd" style="background:#6b2c86"></div><div class="hl"></div><div class="abs" style="left:0;top:21px;width:90px;height:17px;background:#ff0000"></div></div>
<span class="t " style="top:983px;font-size:15px;line-height:19px;color:#fff;letter-spacing:0.529px;left:673.40px;">Math 2</span>
<span class="t " style="top:1003px;font-size:15px;line-height:19px;color:#fff;letter-spacing:0.443px;left:684.50px;">Empty i...</span>
<svg class="abs" style="left:668px;top:1005px" width="16" height="17" viewBox="0 0 16 17"><path d="M7.8,1.8 L14.8,15.2 H0.8 Z" fill="#ffef00" stroke="#4a3a50" stroke-width="1" stroke-linejoin="round"/><rect x="7.1" y="6" width="1.5" height="5.6" fill="#9a8a30"/><rect x="7.1" y="12.4" width="1.5" height="1.5" fill="#9a8a30"/></svg>
<span class="t " style="top:1023px;font-size:14.5px;line-height:18.5px;color:#0a0a0a;letter-spacing:0.507px;left:673.00px;font-weight:bold;">306.62 A/...</span>
<span class="t " style="top:1042px;font-size:14px;line-height:18px;color:#0c0c0c;letter-spacing:0.361px;left:673.50px;">-Intg(Ch3...</span>
<div class="vr" style="left:1118px;top:1000px;height:78px"></div>
<div class="btn" style="left:1129px;top:999px;width:40px;height:80px;border-radius:8px"></div>
<div class="abs" style="left:1133.3px;top:1007px;width:31.5px;height:2px;background:#b52020"></div>
<span class="t " style="top:1018px;font-size:15px;line-height:19px;color:#f0f0f0;letter-spacing:-0.095px;left:1148.95px;transform:translateX(-50%);">Add</span>
<span class="t " style="top:1034px;font-size:15px;line-height:19px;color:#f0f0f0;letter-spacing:-0.254px;left:1148.87px;transform:translateX(-50%);">New</span>
<span class="t " style="top:1050px;font-size:15px;line-height:19px;color:#f0f0f0;letter-spacing:0.051px;left:1149.03px;transform:translateX(-50%);">Math</span>
<div class="btn" style="left:1174px;top:999px;width:40px;height:80px;border-radius:8px"></div>
<div class="abs" style="left:1178.3px;top:1007px;width:31.5px;height:2px;background:#c3c9e2"></div>
<span class="t " style="top:1018px;font-size:15px;line-height:19px;color:#f0f0f0;letter-spacing:-0.095px;left:1193.95px;transform:translateX(-50%);">Add</span>
<span class="t " style="top:1034px;font-size:15px;line-height:19px;color:#f0f0f0;letter-spacing:-0.254px;left:1193.87px;transform:translateX(-50%);">New</span>
<span class="t " style="top:1050px;font-size:15px;line-height:19px;color:#f0f0f0;letter-spacing:-1.171px;left:1193.41px;transform:translateX(-50%);">Ref</span>
<div class="btn" style="left:1219px;top:999px;width:40px;height:80px;border-radius:8px"></div>
<div class="abs" style="left:1223.3px;top:1007px;width:31.5px;height:2px;background:#c252ff"></div>
<span class="t " style="top:1018px;font-size:15px;line-height:19px;color:#f0f0f0;letter-spacing:-0.095px;left:1238.95px;transform:translateX(-50%);">Add</span>
<span class="t " style="top:1034px;font-size:15px;line-height:19px;color:#f0f0f0;letter-spacing:-0.254px;left:1238.87px;transform:translateX(-50%);">New</span>
<span class="t " style="top:1050px;font-size:15px;line-height:19px;color:#f0f0f0;letter-spacing:-1.424px;left:1238.29px;transform:translateX(-50%);">Bus</span>
<div class="vr" style="left:1269px;top:1000px;height:78px"></div>
<div class="sbadge" style="left:1281px;width:198px"><div class="hd"></div><div class="hl"></div></div><span class="t " style="top:1003px;font-size:16px;line-height:20px;color:#f4f4f4;letter-spacing:0.274px;left:1285.80px;">Horizontal</span>
<span class="t " style="top:1023px;font-size:14.5px;line-height:18.5px;color:#0c0c0c;letter-spacing:-0.069px;left:1285.30px;">4 ms/div</span>
<span class="t " style="top:1042px;font-size:14px;line-height:18px;color:#0c0c0c;letter-spacing:-0.366px;left:1285.30px;">SR: 1 MS/s</span>
<span class="t " style="top:1060px;font-size:14.5px;line-height:18.5px;color:#0c0c0c;letter-spacing:-0.284px;left:1285.30px;">RL: 40 kpts</span>
<span class="t " style="top:1023px;font-size:14.5px;line-height:18.5px;color:#0c0c0c;letter-spacing:0.004px;left:1391.30px;">40 ms</span>
<span class="t " style="top:1042px;font-size:14.5px;line-height:18.5px;color:#0c0c0c;letter-spacing:-0.053px;left:1391.30px;">1 µs/pt</span>
<span class="t " style="top:1060px;font-size:14.5px;line-height:18.5px;color:#0c0c0c;letter-spacing:1.543px;left:1405.50px;">3%</span>
<svg class="abs" style="left:1390px;top:1061px" width="12" height="15" viewBox="0 0 12 15" font-family="'Liberation Sans', sans-serif"><path d="M1.2,1.2 H9.8 V10 H7.2 L5.5,13.2 L3.8,10 H1.2 Z" fill="#000" stroke="#f78c1f" stroke-width="1.3"/><text x="5.5" y="8.6" font-size="7.5" font-weight="bold" fill="#fff" text-anchor="middle">T</text></svg>
<div class="sbadge" style="left:1486px;width:159px"><div class="hd"></div><div class="hl"></div></div><span class="t " style="top:1003px;font-size:16px;line-height:20px;color:#f4f4f4;letter-spacing:-0.181px;left:1490.80px;">Trigger</span>
<div class="abs" style="left:1490px;top:1025px;width:30px;height:16px;border-radius:5px;background:#2424c8;border:1px solid #0a0a14"></div>
<span class="t " style="top:1023px;font-size:15px;line-height:19px;color:#fff;left:1505.00px;transform:translateX(-50%);">6</span>
<svg class="abs" style="left:1528px;top:1024px" width="22" height="16" viewBox="1528 1024 22 16"><polyline points="1530.3,1036.7 1534,1036.7 1542.2,1027.4 1546,1027.4" fill="none" stroke="#3a3a98" stroke-width="1.1"/></svg>
<span class="t " style="top:1023px;font-size:14.5px;line-height:18.5px;color:#0c0c0c;letter-spacing:0.118px;left:1556.00px;">3 V</span>
<div class="sbadge" style="left:1651px;width:149px"><div class="hd"></div><div class="hl"></div></div><span class="t " style="top:1003px;font-size:16px;line-height:20px;color:#f4f4f4;letter-spacing:0.012px;left:1655.80px;">Acquisition</span>
<span class="t " style="top:1023px;font-size:14.5px;line-height:18.5px;color:#0c0c0c;letter-spacing:0.069px;left:1655.30px;">Manual,</span>
<span class="t " style="top:1023px;font-size:14.5px;line-height:18.5px;color:#0c0c0c;letter-spacing:-0.264px;left:1736.50px;">Analyze</span>
<span class="t " style="top:1042px;font-size:14.5px;line-height:18.5px;color:#0c0c0c;letter-spacing:-0.151px;left:1655.30px;">High Res: 16 bits</span>
<span class="t " style="top:1060px;font-size:14.5px;line-height:18.5px;color:#0c0c0c;letter-spacing:-0.186px;left:1655.30px;">Single: 1 /1</span>
<div class="vr" style="left:1811px;top:1000px;height:78px"></div>
<div class="abs" style="left:1822px;top:999px;width:90px;height:36px;border-radius:7px;background:#ff1d25;border:1px solid #5a4640"></div>
<span class="t " style="top:1007px;font-size:13.5px;line-height:17.5px;color:#fff;letter-spacing:0.418px;left:1867.21px;transform:translateX(-50%);font-weight:bold;">Stopped</span>
<div class="abs" style="left:1822px;top:1040px;width:90px;height:39px;border-radius:6px;background:#cbcbcb"></div>
<span class="t " style="top:1039px;font-size:15px;line-height:19px;color:#0c0c0c;letter-spacing:-0.223px;left:1866.89px;transform:translateX(-50%);">15 May 2025</span>
<span class="t " style="top:1056px;font-size:15px;line-height:19px;color:#0c0c0c;letter-spacing:-0.190px;left:1866.90px;transform:translateX(-50%);">4:08:03 PM</span>
</div></footer>
</body></html>
